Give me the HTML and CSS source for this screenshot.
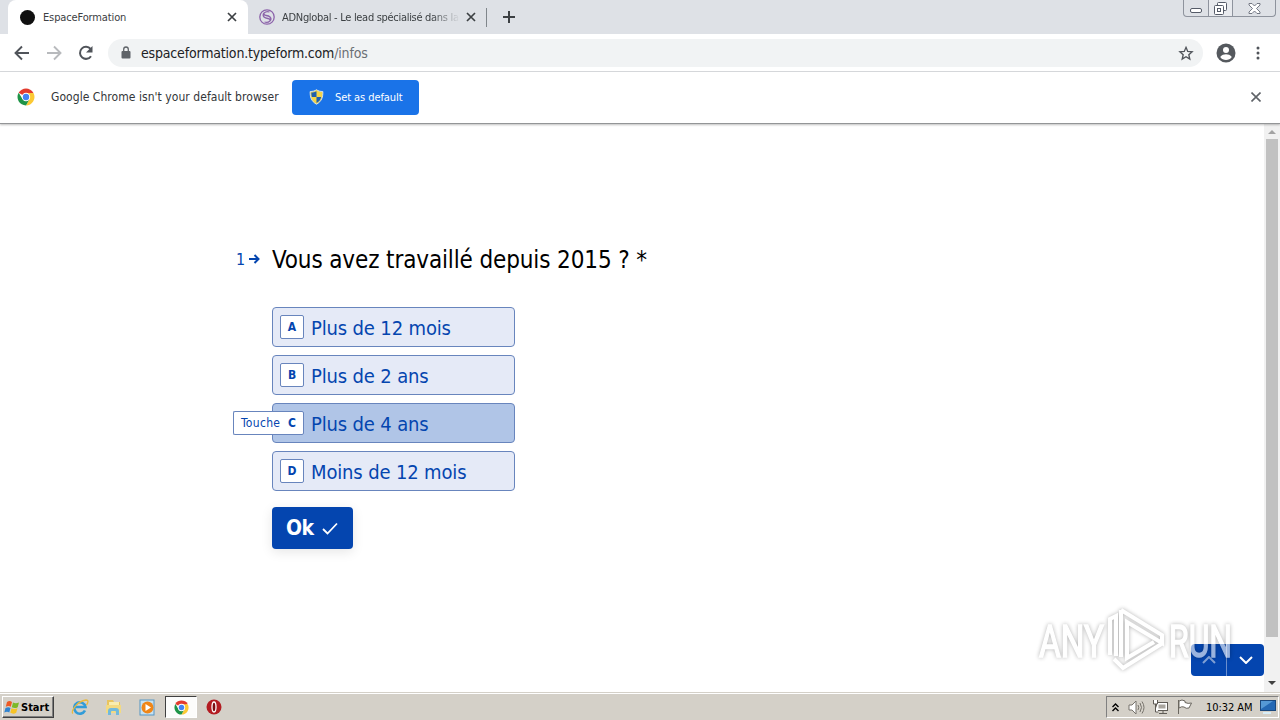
FILE: index.html
```html
<!DOCTYPE html>
<html lang="fr">
<head>
    <meta charset="UTF-8">
    <meta name="viewport" content="width=device-width, initial-scale=1.0">
    <title>EspaceFormation</title>
    <link rel="stylesheet" href="styles.css">
</head>
<body>
    <div class="desktop">
        <div class="tab-strip">
            <div class="tab active">
                <span class="dot"></span>
                <span class="tab-title">EspaceFormation</span>
                <svg class="tab-close" width="10" height="10" viewBox="0 0 10 10"><path d="M1 1l8 8M9 1l-8 8" stroke="#3c4043" stroke-width="1.700"/></svg>
            </div>
            <div class="tab">
                <svg class="favicon" width="16" height="16" viewBox="0 0 16 16" fill="none" stroke="#8c63aa" stroke-width="1.300"><circle cx="8" cy="8" r="7.200"/><path d="M10.500 3C6 1.500 2.500 5.500 5 8s6 .5 6 3M5.500 13c4.500 1.500 8-2.500 5.500-5s-6-.5-6-3"/></svg>
                <span class="tab-title fade">ADNglobal - Le lead spécialisé dans la</span>
                <svg class="tab-close" width="10" height="10" viewBox="0 0 10 10"><path d="M1 1l8 8M9 1l-8 8" stroke="#3c4043" stroke-width="1.700"/></svg>
            </div>
            <span class="tab-divider"></span>
            <svg class="new-tab" width="12" height="12" viewBox="0 0 12 12"><path d="M6 0v12M0 6h12" stroke="#3c4043" stroke-width="2"/></svg>
            <div class="window-buttons">
                <span class="win-btn min"><svg width="13" height="6" viewBox="0 0 13 6"><rect x=".5" y=".5" width="11" height="4" rx="1.500" fill="#fff" stroke="#555b68"/></svg></span>
                <span class="win-btn max"><svg width="13" height="13" viewBox="0 0 13 13" fill="#fff" stroke="#555b68"><rect x="3.500" y=".5" width="9" height="8" rx="1"/><rect x=".5" y="3.500" width="9" height="9" rx="1"/><rect x="3.500" y="6.500" width="3" height="3"/></svg></span>
                <span class="win-btn close"><svg width="13" height="11" viewBox="0 0 13 11"><path d="M1 .5h3l2.500 2.500L9 .5h3v1.500L8.500 5.500 12 9v1.500H9L6.500 8 4 10.500H1V9l3.500-3.500L1 2z" fill="#fff" stroke="#666c78" stroke-width=".9"/></svg></span>
            </div>
        </div>

        <div class="toolbar">
            <svg class="back" width="16" height="16" viewBox="0 0 16 16" fill="none" stroke="#50545a" stroke-width="1.900"><path d="M15 8H2M8 1.500L1.500 8 8 14.500"/></svg>
            <svg class="forward" width="16" height="16" viewBox="0 0 16 16" fill="none" stroke="#b8babd" stroke-width="1.900"><path d="M1 8h13M8 1.500L14.500 8 8 14.500"/></svg>
            <svg class="reload" width="16" height="16" viewBox="0 0 16 16"><path d="M13 11.200A6 6 0 1 1 12.600 4" fill="none" stroke="#50545a" stroke-width="2"/><path d="M14.500 1v6.500H8z" fill="#50545a"/></svg>
            <div class="address-bar">
                <svg width="10" height="13" viewBox="0 0 10 13"><rect x=".5" y="5" width="9" height="7.500" rx="1" fill="#5f6368"/><path d="M2.700 5V3.300a2.300 2.300 0 0 1 4.600 0V5" fill="none" stroke="#5f6368" stroke-width="1.300"/></svg>
                <span class="url">espaceformation.typeform.com<span class="path">/infos</span></span>
                <svg class="star" width="16" height="16" viewBox="0 0 24 24"><path d="M12 3.500l2.600 6.100 6.600.6-5 4.400 1.500 6.500-5.700-3.400-5.700 3.400 1.500-6.500-5-4.400 6.600-.6z" fill="none" stroke="#50545a" stroke-width="2"/></svg>
            </div>
            <svg class="profile" width="20" height="20" viewBox="0 0 20 20"><circle cx="10" cy="10" r="9.500" fill="#55595e"/><circle cx="10" cy="7" r="3" fill="#fff"/><path d="M4.200 14c1.200-2 4-2.700 5.800-2.700s4.600.7 5.800 2.700a7 7 0 0 1-11.600 0z" fill="#fff"/></svg>
            <svg class="menu" width="4" height="14" viewBox="0 0 4 14" fill="#50545a"><circle cx="2" cy="2" r="1.500"/><circle cx="2" cy="7" r="1.500"/><circle cx="2" cy="12" r="1.500"/></svg>
        </div>

        <div class="infobar">
            <svg width="18" height="18" viewBox="0 0 18 18"><path d="M9 9L1.640 4.750A8.500 8.500 0 0 1 16.360 4.750z" fill="#e33b2e"/><path d="M9 5h7.500a8.500 8.500 0 0 1-7.500 12.500l3.500-6.500z" fill="#fcc934"/><path d="M9 17.500A8.500 8.500 0 0 1 1.640 4.750L5.500 11l6.500 1z" fill="#1e9447"/><circle cx="9" cy="9" r="4.200" fill="#fff"/><circle cx="9" cy="9" r="3.200" fill="#4384f3"/></svg>
            <span class="infobar-text">Google Chrome isn't your default browser</span>
            <div class="default-btn">
                <svg width="15" height="16" viewBox="0 0 15 16"><path d="M7.500.7C9 2 11.500 2.500 13.800 2.500c.3 5-1 10-6.300 12.700C2.200 12.500.9 7.500 1.200 2.500 3.500 2.500 6 2 7.500.7z" fill="#f5d547" stroke="#d5e1ea"/><path d="M7.500 2.200C6 3 4 3.500 2.300 3.500c0 1.500.1 3 .5 4.500h4.700zM7.500 8h4.700c-.5 2.500-2 4.600-4.700 6z" fill="#1f5fae"/></svg>
                <span>Set as default</span>
            </div>
            <svg class="infobar-close" width="10" height="10" viewBox="0 0 10 10"><path d="M.5.5l9 9M9.500.5l-9 9" stroke="#5f6368" stroke-width="1.600"/></svg>
        </div>

        <div class="page">
            <div class="form">
                <div class="question">
                    <span class="number">1</span>
                    <svg width="11" height="10" viewBox="0 0 11 10"><path d="M0 5h9M5.500 1l4 4-4 4" fill="none" stroke="#0445af" stroke-width="2"/></svg>
                    <h1>Vous avez travaillé depuis 2015 ? *</h1>
                </div>
                <div class="choices">
                    <div class="choice"><span class="key">A</span><span class="label">Plus de 12 mois</span></div>
                    <div class="choice"><span class="key">B</span><span class="label">Plus de 2 ans</span></div>
                    <div class="choice hover"><span class="key"><span class="hint">Touche</span>C</span><span class="label">Plus de 4 ans</span></div>
                    <div class="choice"><span class="key">D</span><span class="label">Moins de 12 mois</span></div>
                </div>
                <div class="ok-btn">
                    <span>Ok</span>
                    <svg width="16" height="13" viewBox="0 0 16 13"><path d="M1 7l4.500 4.500L15 1.500" fill="none" stroke="#fff" stroke-width="1.800"/></svg>
                </div>
            </div>
            <div class="scrollbar">
                <svg width="8" height="4" viewBox="0 0 8 4"><path d="M0 4l4-4 4 4z" fill="#a3a3a3"/></svg>
                <div class="thumb"></div>
                <svg width="8" height="4" viewBox="0 0 8 4"><path d="M0 0l4 4 4-4z" fill="#404040"/></svg>
            </div>
            <div class="nav">
                <span class="nav-btn"><svg width="14" height="8" viewBox="0 0 14 8"><path d="M1 7l6-6 6 6" fill="none" stroke="#7fa0d5" stroke-width="2"/></svg></span>
                <span class="nav-btn"><svg width="14" height="8" viewBox="0 0 14 8"><path d="M1 1l6 6 6-6" fill="none" stroke="#fff" stroke-width="2"/></svg></span>
            </div>
            <svg class="watermark" width="210" height="72" viewBox="0 0 210 72">
                <text x="9" y="53" textLength="65" lengthAdjust="spacingAndGlyphs">ANY</text>
                <text x="139" y="53" textLength="63" lengthAdjust="spacingAndGlyphs">RUN</text>
                <path d="M80 51V15l6-3v40M91 6l41 25v8L97 18v36l27-16M91 6v47M84 55l9 9 40-25"/>
            </svg>
        </div>

        <div class="taskbar">
            <div class="start">
                <svg width="16" height="15" viewBox="0 0 16 15"><path d="M3 2c2-1.500 3.500-1 5 0L6.800 6.800c-1.500-1-3-1-5 0z" fill="#ee5a24"/><path d="M9 2.500c2 1 3.500 1 6 0l-1.300 4.700c-2 1.200-4 1-5.900 0z" fill="#7cb928"/><path d="M1.500 8c2-1 3.500-1 5 0l-1.200 4.500c-1.500-1-3-1-5 0z" fill="#3083d0"/><path d="M7.500 8.200c2 1 3.800 1 6 0l-1.300 4.600c-2 1.200-4 1-5.900 0z" fill="#f7c325"/></svg>
                <span>Start</span>
            </div>
            <svg class="ie" width="18" height="18" viewBox="0 0 18 18" fill="none"><path d="M14 12.500A5.700 5.700 0 1 1 14.500 9H4" stroke="#329cd8" stroke-width="2.600"/><path d="M2 15.500C-1 14 6 3 15 2c3 0 2 3 .5 5" stroke="#e9b93e" stroke-width="1.300"/></svg>
            <svg class="explorer" width="18" height="18" viewBox="0 0 18 18"><path d="M2 2h6l1 2h6v11H2z" fill="#e9c45e"/><path d="M4 4h10v6H4z" fill="#f9edae"/><path d="M1 7h15v8H1z" fill="#f3da82"/><path d="M3 17v-4q0-3 3-3h5q3 0 3 3v4h-3v-3q0-1-1-1H7q-1 0-1 1v3z" fill="#71b9dc"/></svg>
            <svg class="media" width="17" height="17" viewBox="0 0 17 17"><rect x="1" y="1" width="14" height="15" fill="#c7e2f2" stroke="#5595c4"/><circle cx="8.500" cy="8.500" r="6" fill="#ef8618"/><path d="M6.500 5l5.500 3.500L6.500 12z" fill="#fff"/></svg>
            <div class="running">
                <svg width="15" height="15" viewBox="0 0 18 18"><path d="M9 9L1.640 4.750A8.500 8.500 0 0 1 16.360 4.750z" fill="#e33b2e"/><path d="M9 5h7.500a8.500 8.500 0 0 1-7.500 12.500l3.500-6.500z" fill="#fcc934"/><path d="M9 17.500A8.500 8.500 0 0 1 1.640 4.750L5.500 11l6.500 1z" fill="#1e9447"/><circle cx="9" cy="9" r="4.400" fill="#fff"/><circle cx="9" cy="9" r="3.300" fill="#4384f3"/></svg>
            </div>
            <svg class="opera" width="16" height="16" viewBox="0 0 16 16"><circle cx="8" cy="8" r="7.500" fill="#b31c22"/><ellipse cx="8" cy="8" rx="2" ry="5" fill="#7c0d12" stroke="#fff" stroke-width="1.300"/></svg>
            <div class="tray">
                <svg class="chevrons" width="7" height="9" viewBox="0 0 7 9" fill="none" stroke="#000" stroke-width="1.400"><path d="M.5 4l3-3 3 3M.5 8l3-3 3 3"/></svg>
                <svg class="volume" width="17" height="15" viewBox="0 0 17 15" fill="none" stroke="#77736c"><path d="M1 5h3l4-4v13l-4-4H1z" fill="#fff"/><path d="M10 5q1.500 2.500 0 5M12 3q3 4.500 0 9M14 1.500q4 6 0 12"/></svg>
                <svg class="network" width="17" height="16" viewBox="0 0 17 16" fill="#fff" stroke="#5f5b55"><rect x="4.500" y="3.500" width="11" height="8"/><path d="M7 14.500h8M11 12v2M1.500 1v4h4V1M3.500 5v8h3"/><rect x="6.500" y="5.500" width="7" height="4" fill="#a9a59e" stroke="none"/></svg>
                <svg class="flag" width="17" height="16" viewBox="0 0 17 16" fill="#fff" stroke="#6a665f"><path d="M2.500 15V1M3 2q3-2 6 0v1.500q3 1.500 6.500.5l-2.500 5q-3 1-5-1-2-1-5 1z"/></svg>
                <span class="clock">10:32 AM</span>
                <svg width="16" height="14" viewBox="0 0 16 14"><rect x=".5" y=".5" width="15" height="10" fill="#2468b4" stroke="#1b487d"/><path d="M1 1h12L1 9z" fill="#5599d6"/><path d="M3 13h8" stroke="#d8edf7" stroke-width="2"/></svg>
            </div>
        </div>
    </div>
</body>
</html>
```
FILE: styles.css
```css
* {
    box-sizing: border-box;
}
body {
    margin: 0;
    font-family: Tahoma, 'DejaVu Sans Condensed', 'DejaVu Sans', sans-serif;
    background-color: #fff;
}
svg {
    display: block;
    flex-shrink: 0;
}
.desktop {
    width: 1280px;
    height: 720px;
    display: flex;
    flex-direction: column;
    overflow: hidden;
}

/* Browser tabs */
.tab-strip {
    height: 34px;
    background: #dee1e6;
    display: flex;
    align-items: center;
    padding-left: 8px;
    font-size: 11px;
    color: #3c4043;
    white-space: nowrap;
}
.tab {
    height: 34px;
    width: 238px;
    display: flex;
    align-items: center;
    padding: 0 10px 0 11px;
}
.tab.active {
    width: 240px;
    padding: 0 11px 0 12px;
    background: #fff;
    border-radius: 8px 8px 0 0;
}
.dot {
    width: 15px;
    height: 15px;
    border-radius: 50%;
    background: #101010;
    margin-right: 8px;
}
.favicon {
    margin-right: 7px;
}
.tab-title {
    letter-spacing: -0.13px;
}
.fade {
    width: 178px;
    overflow: hidden;
    letter-spacing: -0.3px;
    -webkit-mask-image: linear-gradient(to right, #000 84%, transparent);
    mask-image: linear-gradient(to right, #000 84%, transparent);
}
.tab-close {
    margin-left: auto;
}
.tab-divider {
    width: 1px;
    height: 19px;
    background: #80868b;
}
.new-tab {
    margin-left: 16px;
}
.window-buttons {
    margin: 0 4px 0 auto;
    align-self: flex-start;
    display: flex;
    height: 17px;
    border: 1px solid #8e939d;
    border-top: none;
    border-radius: 0 0 4px 4px;
}
.win-btn {
    display: flex;
    justify-content: center;
    align-items: center;
    width: 25px;
}
.win-btn.min {
    padding-top: 5px;
    width: 24px;
}
.win-btn.max {
    border-left: 1px solid #8e939d;
    border-right: 1px solid #8e939d;
    background: #e8eaee;
}
.win-btn.close {
    width: 42px;
}

/* Toolbar */
.toolbar {
    height: 38px;
    display: flex;
    align-items: center;
    padding: 0 20px 0 14px;
    border-bottom: 1px solid #d9dbde;
}
.forward {
    margin-left: 16px;
}
.reload {
    margin-left: 16px;
}
.address-bar {
    width: 1095px;
    height: 28px;
    margin-left: 14px;
    padding: 0 9px 0 13px;
    border-radius: 14px;
    background: #f1f3f4;
    display: flex;
    align-items: center;
}
.url {
    margin-left: 10px;
    font-size: 14px;
    letter-spacing: -0.18px;
    color: #202124;
}
.path {
    color: #6b6f74;
}
.star {
    margin-left: auto;
}
.profile {
    margin-left: 13px;
}
.menu {
    margin-left: auto;
}

/* Default browser bar */
.infobar {
    height: 52px;
    display: flex;
    align-items: center;
    padding: 0 19px 1px 17px;
    border-bottom: 1px solid #939597;
    position: relative;
    z-index: 1;
    box-shadow: 0 1px 2px rgba(0, 0, 0, 0.25);
    white-space: nowrap;
}
.infobar-text {
    width: 228px;
    margin-left: 16px;
    font-size: 12px;
    letter-spacing: 0.05px;
    color: #333639;
}
.default-btn {
    width: 127px;
    height: 35px;
    margin-left: 13px;
    padding-left: 17px;
    border-radius: 4px;
    background: #1a73e8;
    color: #fff;
    display: flex;
    align-items: center;
    gap: 11px;
    font-size: 11px;
    letter-spacing: -0.08px;
}
.infobar-close {
    margin-left: auto;
}

/* Form page */
.page {
    height: 568px;
    position: relative;
    display: flex;
    justify-content: space-between;
}
.form {
    padding: 119px 0 0 236px;
    color: #0445af;
}
.question {
    display: flex;
    align-items: center;
    height: 32px;
}
.number {
    width: 13px;
    font-size: 16px;
    letter-spacing: -1px;
}
.question h1 {
    margin: 0 0 0 12px;
    padding-top: 2px;
    font-size: 24px;
    font-weight: 400;
    line-height: 32px;
    letter-spacing: -0.13px;
    color: #000;
    white-space: nowrap;
}
.choices {
    margin: 32px 0 0 36px;
    width: 243px;
    display: flex;
    flex-direction: column;
    gap: 8px;
}
.choice {
    height: 40px;
    padding-left: 7px;
    border: 1px solid #6885bd;
    border-radius: 4px;
    background: #e5eaf7;
    display: flex;
    align-items: center;
}
.choice.hover {
    background: #b0c5e7;
}
.key {
    width: 24px;
    height: 24px;
    position: relative;
    border: 1px solid #6885bd;
    border-radius: 2px;
    background: #fff;
    display: flex;
    align-items: center;
    justify-content: center;
    font-size: 12px;
    font-weight: 700;
}
/* Shortcut hint that opens over the left edge of the choice */
.hint {
    position: absolute;
    right: 21px;
    top: -1px;
    width: 49px;
    height: 24px;
    padding-left: 7px;
    border: 1px solid #6885bd;
    border-right: none;
    border-radius: 2px 0 0 2px;
    background: #fff;
    font-weight: 400;
    letter-spacing: 0.3px;
    line-height: 22px;
}
.label {
    margin-left: 7px;
    padding-top: 2px;
    font-size: 20px;
    letter-spacing: -0.15px;
    white-space: nowrap;
}
.ok-btn {
    width: 81px;
    height: 42px;
    margin: 16px 0 0 36px;
    padding-left: 14px;
    border-radius: 4px;
    background: #0445af;
    box-shadow: 0 3px 12px rgba(0, 0, 0, 0.1);
    color: #fff;
    display: flex;
    align-items: center;
    gap: 8px;
    font-size: 21px;
    font-weight: 700;
}
.ok-btn span {
    width: 28px;
    letter-spacing: -0.5px;
}
.scrollbar {
    width: 16px;
    background: #f1f1f1;
    display: flex;
    flex-direction: column;
    align-items: center;
    padding: 6px 0 7px;
}
.thumb {
    width: 12px;
    height: 498px;
    margin: 5px 0 44px;
    background: #c1c1c1;
}
.nav {
    position: absolute;
    right: 16px;
    bottom: 16px;
    display: flex;
    border-radius: 4px;
    background: #0445af;
}
.nav-btn {
    width: 37px;
    height: 32px;
    display: flex;
    align-items: center;
    justify-content: center;
}
.nav-btn:first-child {
    width: 36px;
    border-right: 1px solid #6b8fce;
}
.watermark {
    position: absolute;
    left: 1030px;
    top: 480px;
    overflow: visible;
    fill: #fff;
    stroke: #fff;
    stroke-width: 1.5;
    filter: drop-shadow(0 0 2px rgba(0, 0, 0, 0.5));
    opacity: 0.6;
    font-family: 'Roboto', sans-serif;
    font-size: 45px;
}
.watermark path {
    fill: none;
    stroke-width: 4;
}

/* Taskbar */
.taskbar {
    height: 28px;
    border-top: 1px solid #d4d0c8;
    background: #d4d0c8;
    box-shadow: inset 0 1px #fff;
    display: flex;
    align-items: center;
    padding: 2px 1px 1px 2px;
    font-size: 11px;
    color: #000;
}
.start {
    width: 52px;
    height: 22px;
    padding-left: 1px;
    border: 1px solid;
    border-color: #fff #404040 #404040 #fff;
    box-shadow: inset -1px -1px #808080;
    display: flex;
    align-items: center;
    gap: 1px;
    font-weight: 700;
    letter-spacing: 0;
}
.ie {
    margin-left: 17px;
}
.explorer {
    margin-left: 16px;
}
.media {
    margin-left: 16px;
}
.running {
    width: 32px;
    height: 22px;
    margin-left: 9px;
    border: 1px solid;
    border-color: #404040 #fff #fff #404040;
    background: #fcfcfb;
    display: flex;
    align-items: center;
    justify-content: center;
}
.opera {
    margin-left: 9px;
}
.tray {
    width: 173px;
    height: 22px;
    margin-left: auto;
    padding-left: 5px;
    border: 1px solid;
    border-color: #808080 #fff #fff #808080;
    display: flex;
    align-items: center;
    white-space: nowrap;
}
.volume {
    margin-left: 9px;
}
.network {
    margin-left: 7px;
}
.flag {
    margin-left: 7px;
}
.clock {
    width: 47px;
    margin: 0 7px 0 13px;
    letter-spacing: -0.05px;
}
```
